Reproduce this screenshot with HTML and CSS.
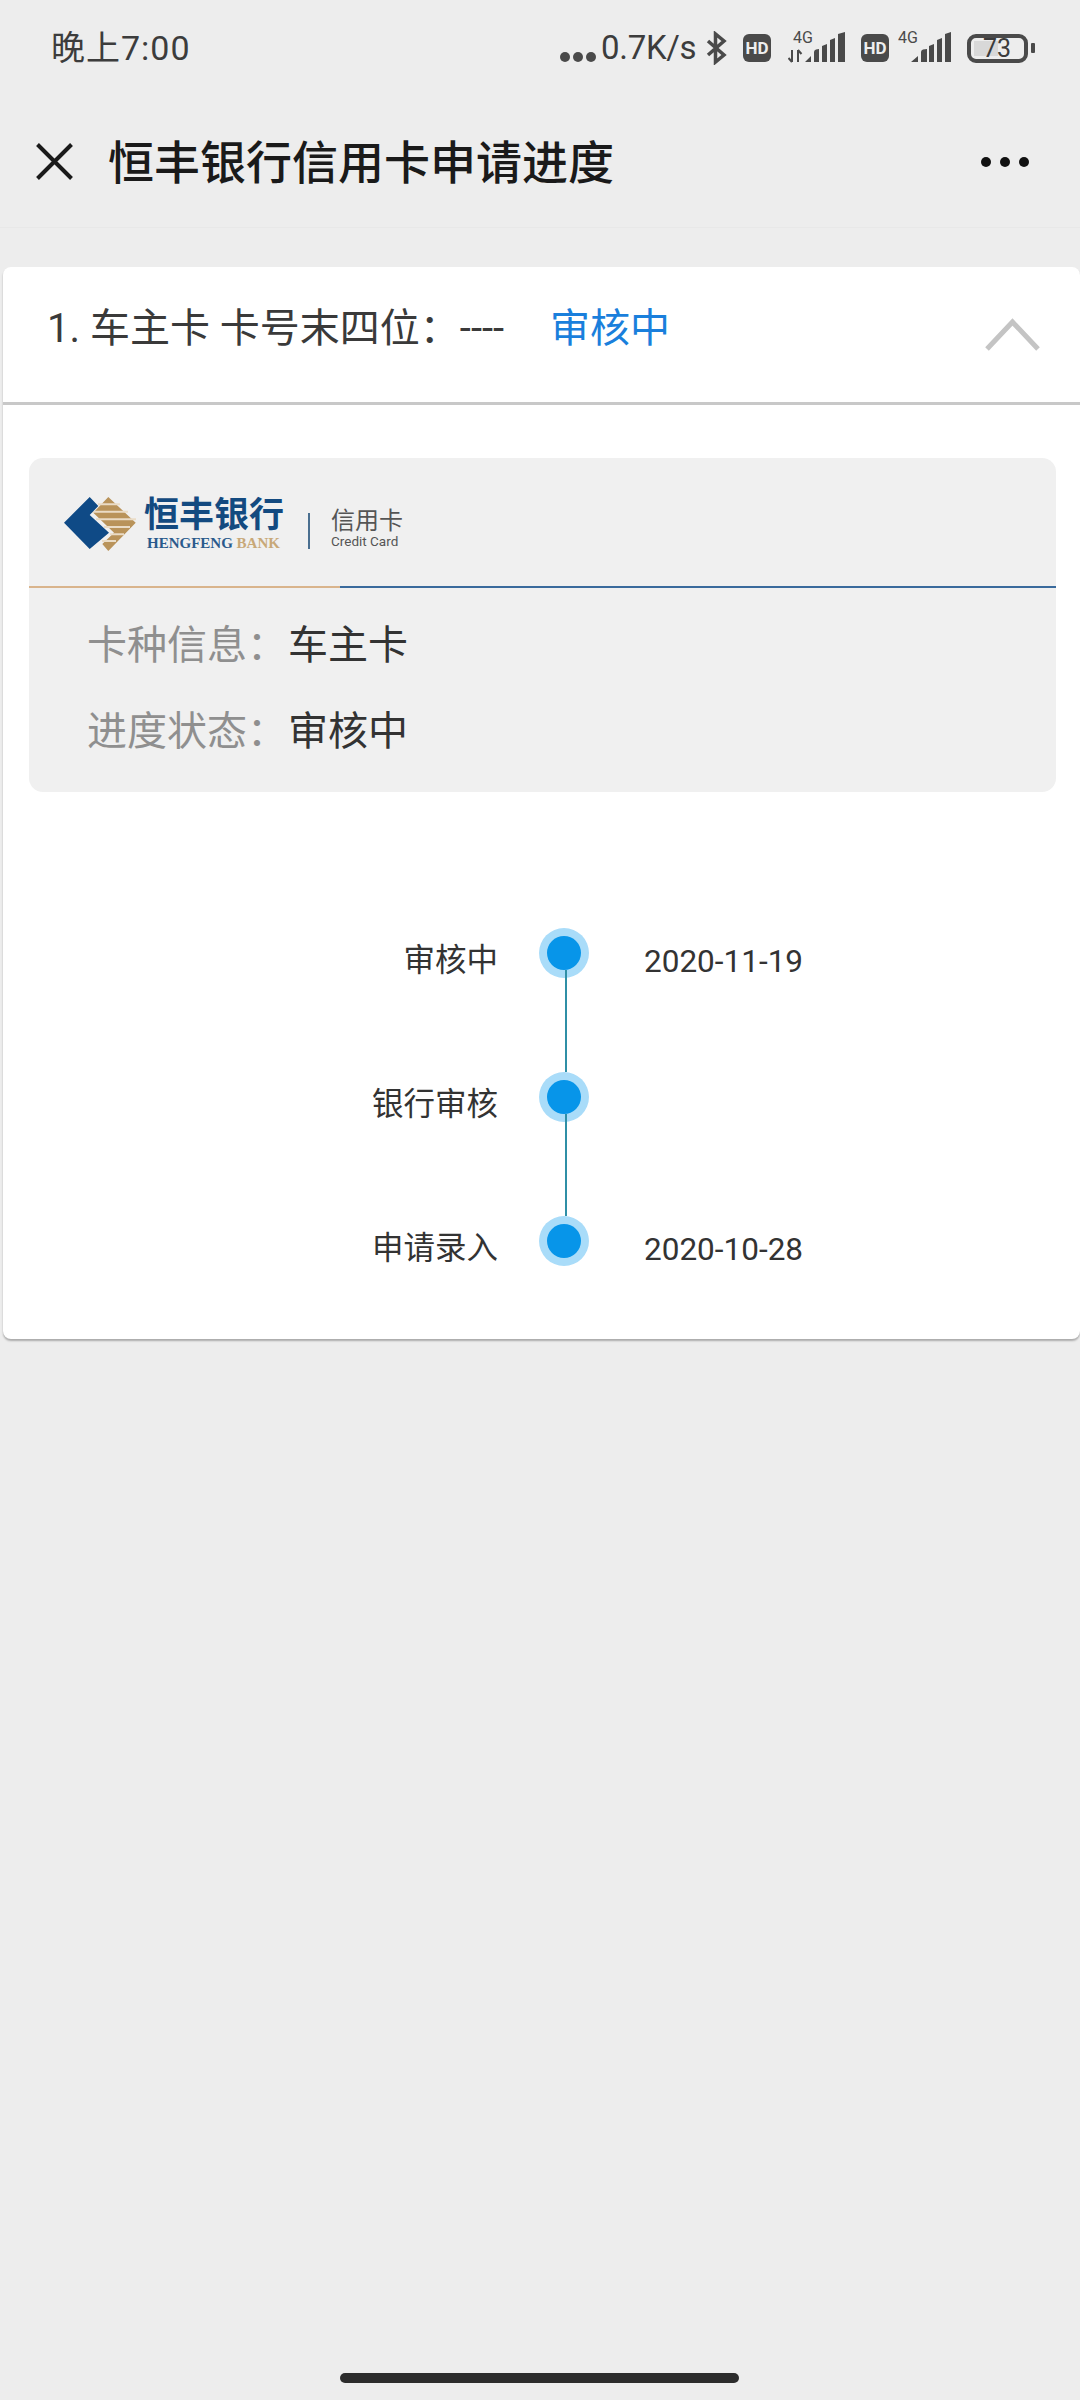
FILE: index.html
```html
<!DOCTYPE html>
<html lang="zh-CN">
<head>
  <meta charset="UTF-8" />
  <meta name="viewport" content="width=device-width, initial-scale=1.0" />
  <title>恒丰银行信用卡申请进度</title>
  <link rel="stylesheet" href="styles.css">
</head>
<body>
  <div class="page">
    <div class="status-bar">
      <span class="status-time">晚上7:00</span>
      <div class="status-right">
        <span class="net-dots"><i></i><i></i><i></i></span>
        <span class="net-speed">0.7K/s</span>
        <svg class="icon-bt" width="21" height="34" viewBox="0 0 21 34"><path d="M2 10 L18 24 L9.500 31 V3 L18 10 L2 24" fill="none" stroke="#4a4a4a" stroke-width="3.500"/></svg>
        <span class="hd-badge hd-first">HD</span>
        <svg class="icon-signal sig-first" width="58" height="48" viewBox="0 -8 58 48">
          <text x="5" y="11" class="sig-label">4G</text>
          <path d="M4 18 V30 M4 30 L0.500 26 M10 30 V18 M10 18 L13.500 22" fill="none" stroke="#4a4a4a" stroke-width="2"/>
          <path d="M17 30 L23 24 V30 Z M26 30 V20 Q26 18 28 17.500 L31 17 V30 Z M34 30 V14 L39 12 V30 Z M42 30 V8 L47 6 V30 Z M50 30 V2 L57 0 V30 Z" fill="#4a4a4a"/>
        </svg>
        <span class="hd-badge hd-second">HD</span>
        <svg class="icon-signal sig-second" width="53" height="48" viewBox="0 -8 53 48">
          <text x="0" y="11" class="sig-label">4G</text>
          <path d="M13 30 L20 24 V30 Z M23 30 V20 Q23 18 25 17.500 L29 17 V30 Z M31 30 V14 L36 12 V30 Z M39 30 V8 L44 6 V30 Z M47 30 V2 L53 0 V30 Z" fill="#4a4a4a"/>
        </svg>
        <span class="battery"><span class="battery-fill"></span><span class="battery-num">73</span></span>
        <span class="battery-nub"></span>
      </div>
    </div>

    <div class="nav-bar">
      <svg class="nav-close" width="37" height="37" viewBox="0 0 37 37"><path d="M1.500 1.500 L35.500 35.500 M35.500 1.500 L1.500 35.500" stroke="#1a1a1a" stroke-width="4" fill="none"/></svg>
      <h1 class="nav-title">恒丰银行信用卡申请进度</h1>
      <div class="nav-more"><i></i><i></i><i></i></div>
    </div>

    <div class="card">
      <div class="card-head">
        <span class="card-name">1. 车主卡 卡号末四位：----</span>
        <span class="card-state">审核中</span>
        <svg class="card-arrow" width="55" height="33" viewBox="0 0 55 33"><path d="M2 31 L27.500 4 L53 31" fill="none" stroke="#c4c4c4" stroke-width="5"/></svg>
      </div>

      <div class="card-body">
        <div class="info-box">
          <div class="bank-head">
            <svg class="bank-mark" width="72" height="56" viewBox="0 0 72 56">
              <path d="M44.300 1 L71.700 26.700 L44.300 55 L38.300 48 L50 36.700 L29.300 16.700 Z" fill="#b9935a"/>
              <path d="M34 8.300 H56 M26 15.700 H64 M32 23.300 H72 M40 31 H66 M46 38.300 H60 M38 45 H52" stroke="#eadcc6" stroke-width="2" fill="none"/>
              <path d="M0 26.700 L25.700 1 L34.300 10 L25.700 19 L45 36.700 L25.700 53 Z" fill="#0f4a86"/>
            </svg>
            <div class="bank-name">
              <span class="bank-cn">恒丰银行</span>
              <span class="bank-en">HENGFENG <b>BANK</b></span>
            </div>
            <span class="bank-sep"></span>
            <div class="bank-card">
              <span class="bank-card-cn">信用卡</span>
              <span class="bank-card-en">Credit Card</span>
            </div>
          </div>
          <div class="bank-line"><span class="line-gold"></span><span class="line-blue"></span></div>
          <div class="info-rows">
            <div class="info-row"><span class="info-label">卡种信息：</span><span class="info-value">车主卡</span></div>
            <div class="info-row"><span class="info-label">进度状态：</span><span class="info-value">审核中</span></div>
          </div>
        </div>

        <div class="timeline">
          <div class="tl-row">
            <span class="tl-label">审核中</span>
            <span class="tl-dot has-line"></span>
            <span class="tl-date">2020-11-19</span>
          </div>
          <div class="tl-row">
            <span class="tl-label">银行审核</span>
            <span class="tl-dot has-line"></span>
            <span class="tl-date"></span>
          </div>
          <div class="tl-row">
            <span class="tl-label">申请录入</span>
            <span class="tl-dot"></span>
            <span class="tl-date">2020-10-28</span>
          </div>
        </div>
      </div>
    </div>

    <div class="home-bar"></div>
  </div>
</body>
</html>
```

FILE: styles.css
```css
:root {
  --bg-color: #ededed;
  --text-color: #333;
  --icon-color: #4a4a4a;
  --blue: #1a7fdc;
}

* {
  box-sizing: border-box;
}

body {
  margin: 0;
  background: var(--bg-color);
  color: var(--text-color);
  font-family: Roboto, "Noto Sans CJK SC", sans-serif;
}

.page {
  width: 1080px;
  min-height: 2400px;
  display: flex;
  flex-direction: column;
  overflow: hidden;
}

/* status bar */
.status-bar {
  height: 96px;
  padding: 0 45px 0 51px;
  display: flex;
  align-items: center;
  justify-content: space-between;
  color: #3c3c3c;
}

.status-time {
  font-size: 34px;
  line-height: 40px;
  letter-spacing: 1px;
}

.status-right {
  display: flex;
  align-items: center;
}

.net-dots {
  display: flex;
  gap: 3px;
  margin-top: 18px;
  margin-right: 5px;
}

.net-dots i {
  width: 10px;
  height: 10px;
  border-radius: 50%;
  background: var(--icon-color);
}

.net-speed {
  font-size: 33px;
  line-height: 38px;
  letter-spacing: -0.3px;
  width: 97px;
  white-space: nowrap;
}

.icon-bt {
  margin-left: 8px;
}

.hd-badge {
  width: 28px;
  height: 28px;
  border-radius: 6px;
  background: var(--icon-color);
  color: #eee;
  font-size: 17px;
  font-weight: 700;
  line-height: 28px;
  text-align: center;
}

.hd-first {
  margin-left: 16px;
}

.hd-second {
  margin-left: 15px;
}

.sig-first {
  margin-left: 17px;
}

.sig-second {
  margin-left: 9px;
}

.sig-label {
  font-family: Roboto, sans-serif;
  font-size: 16px;
  fill: #4a4a4a;
}

.battery {
  position: relative;
  width: 61px;
  height: 29px;
  margin-left: 16px;
  border: 4px solid var(--icon-color);
  border-radius: 9px;
}

.battery-fill {
  position: absolute;
  left: 3px;
  top: 3px;
  bottom: 3px;
  width: 24px;
  background: #d8d8d8;
}

.battery-num {
  position: absolute;
  left: 12px;
  top: -2px;
  font-size: 25px;
  line-height: 25px;
}

.battery-nub {
  width: 4px;
  height: 10px;
  margin-left: 3px;
  border-radius: 1px;
  background: var(--icon-color);
}

/* nav bar */
.nav-bar {
  height: 132px;
  padding: 0 51px 0 36px;
  display: flex;
  align-items: center;
  border-bottom: 1px solid #e8e8e8;
}

.nav-title {
  margin: 2px 0 0 35px;
  flex-grow: 1;
  font-size: 46px;
  line-height: 60px;
  font-weight: 500;
  color: #1a1a1a;
}

.nav-more {
  display: flex;
  gap: 9px;
}

.nav-more i {
  width: 10px;
  height: 10px;
  border-radius: 50%;
  background: #111;
}

/* card */
.card {
  margin: 39px 0 0 3px;
  background: #fff;
  border-radius: 8px;
  box-shadow: 0 2px 2px rgba(0, 0, 0, 0.28);
}

.card-head {
  height: 138px;
  padding: 0 40px 12px 44px;
  display: flex;
  align-items: center;
  border-bottom: 3px solid #c8c8c8;
  font-size: 40px;
}

.card-name {
  line-height: 50px;
  color: #3a3a3a;
}

.card-state {
  margin-left: 46px;
  line-height: 50px;
  color: var(--blue);
}

.card-arrow {
  margin-left: auto;
  margin-top: 11px;
}

.card-body {
  padding: 53px 24px 26px 26px;
}

/* bank info box */
.info-box {
  height: 334px;
  background: #f0f0f0;
  border-radius: 14px;
}

.bank-head {
  height: 128px;
  padding: 4px 0 0 35px;
  display: flex;
  align-items: center;
}

.bank-mark {
  flex-shrink: 0;
}

.bank-name {
  margin-left: 8px;
  display: flex;
  flex-direction: column;
}

.bank-cn {
  font-size: 35px;
  line-height: 36px;
  font-weight: 700;
  color: #134a80;
}

.bank-en {
  margin: 2px 0 0 3px;
  font-family: "Liberation Serif", serif;
  font-size: 15px;
  line-height: 14px;
  font-weight: 700;
  color: #2a5a8c;
  white-space: nowrap;
}

.bank-en b {
  color: #c8a878;
}

.bank-sep {
  width: 2px;
  height: 36px;
  margin: 14px 0 0 24px;
  background: #4a6f90;
}

.bank-card {
  margin: 8px 0 0 21px;
  display: flex;
  flex-direction: column;
  color: #555;
}

.bank-card-cn {
  font-size: 24px;
  line-height: 26px;
}

.bank-card-en {
  font-size: 13.500px;
  line-height: 14px;
  white-space: nowrap;
}

.bank-line {
  height: 2px;
  display: flex;
}

.line-gold {
  width: 311px;
  background: #d9b48c;
}

.line-blue {
  flex-grow: 1;
  background: #3a6a9c;
}

.info-rows {
  padding: 15px 0 0 58px;
}

.info-row {
  height: 86px;
  display: flex;
  align-items: center;
  font-size: 40px;
}

.info-label {
  width: 201px;
  line-height: 50px;
  color: #8f8f8f;
}

.info-value {
  line-height: 50px;
  color: var(--text-color);
}

/* timeline */
.timeline {
  margin: 89px -24px 0 -26px;
}

.tl-row {
  height: 144px;
  display: grid;
  grid-template-columns: 495px 132px 1fr;
  align-items: center;
  font-size: 31.500px;
}

.tl-label {
  padding-top: 16px;
  line-height: 40px;
  text-align: right;
}

.tl-date {
  padding: 18px 0 0 14px;
  line-height: 40px;
}

.tl-dot {
  position: relative;
  justify-self: center;
  width: 34px;
  height: 34px;
  border-radius: 50%;
  background: #0795e9;
  box-shadow: 0 0 0 8px #a9dcf9;
}

.tl-dot.has-line::after {
  content: "";
  position: absolute;
  left: 18px;
  top: 34px;
  width: 2px;
  height: 102px;
  background: #2f8fa6;
}

.home-bar {
  width: 399px;
  height: 10px;
  margin: auto 0 17px 340px;
  border-radius: 5px;
  background: #2c2c2c;
}
```
